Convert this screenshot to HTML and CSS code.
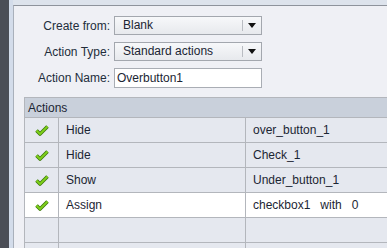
FILE: index.html
```html
<!DOCTYPE html>
<html lang="en">
<head>
    <meta charset="UTF-8">
    <title>Action Editor</title>
    <link rel="stylesheet" href="styles.css">
</head>
<body>
    <div class="side"></div>
    <div class="edge"></div>
    <div class="frame">
        <div class="panel">
            <div class="form">
                <label class="lbl">Create from:</label>
                <div class="select"><span class="val">Blank</span><span class="arrow"><i></i></span></div>
                <label class="lbl">Action Type:</label>
                <div class="select"><span class="val">Standard actions</span><span class="arrow"><i></i></span></div>
                <label class="lbl">Action Name:</label>
                <div class="input">Overbutton1</div>
            </div>

            <table class="actions">
                <colgroup>
                    <col class="c-chk">
                    <col class="c-act">
                    <col class="c-arg">
                </colgroup>
                <tr class="head"><td colspan="3">Actions</td></tr>
                <tr>
                    <td class="chk"><svg width="14" height="11" viewBox="0 0 14 11"><path d="M1.5 5.5 L5 9 L12.5 1.5" fill="none" stroke="#3f7a0c" stroke-width="3.6" stroke-linejoin="round"/><path d="M1.5 5.5 L5 9 L12.5 1.5" fill="none" stroke="#7fd11b" stroke-width="1.8" stroke-linejoin="round"/></svg></td>
                    <td>Hide</td><td>over_button_1</td>
                </tr>
                <tr>
                    <td class="chk"><svg width="14" height="11" viewBox="0 0 14 11"><path d="M1.5 5.5 L5 9 L12.5 1.5" fill="none" stroke="#3f7a0c" stroke-width="3.6" stroke-linejoin="round"/><path d="M1.5 5.5 L5 9 L12.5 1.5" fill="none" stroke="#7fd11b" stroke-width="1.8" stroke-linejoin="round"/></svg></td>
                    <td>Hide</td><td>Check_1</td>
                </tr>
                <tr>
                    <td class="chk"><svg width="14" height="11" viewBox="0 0 14 11"><path d="M1.5 5.5 L5 9 L12.5 1.5" fill="none" stroke="#3f7a0c" stroke-width="3.6" stroke-linejoin="round"/><path d="M1.5 5.5 L5 9 L12.5 1.5" fill="none" stroke="#7fd11b" stroke-width="1.8" stroke-linejoin="round"/></svg></td>
                    <td>Show</td><td>Under_button_1</td>
                </tr>
                <tr class="sel">
                    <td class="chk"><svg width="14" height="11" viewBox="0 0 14 11"><path d="M1.5 5.5 L5 9 L12.5 1.5" fill="none" stroke="#3f7a0c" stroke-width="3.6" stroke-linejoin="round"/><path d="M1.5 5.5 L5 9 L12.5 1.5" fill="none" stroke="#7fd11b" stroke-width="1.8" stroke-linejoin="round"/></svg></td>
                    <td>Assign</td><td>checkbox1&nbsp;&nbsp;&nbsp;with&nbsp;&nbsp;&nbsp;0</td>
                </tr>
                <tr><td class="chk"></td><td></td><td></td></tr>
                <tr><td class="chk"></td><td></td><td></td></tr>
            </table>
        </div>
    </div>
</body>
</html>
```

FILE: styles.css
```css
/* window chrome */
html, body {
    margin: 0;
    height: 100%;
    overflow: hidden;
}
body {
    display: flex;
    font-family: "Liberation Sans", Arial, sans-serif;
    font-size: 12px;
    color: #1b2533;
    background: #dfe5ee;
}
.side {
    width: 9px;
    flex: none;
    background: #4b4e56;
}
.edge {
    width: 4px;
    flex: none;
    background: #d3dcea;
}
.frame {
    flex: 1;
    padding-top: 5px;
    background: #dde3ec;
}
.panel {
    height: 100%;
    background: #eff0f5;
    border-top: 1px solid #8e939c;
    border-left: 1px solid #a9b0bb;
}

/* form rows */
.form {
    display: grid;
    grid-template-columns: 96px 148px;
    column-gap: 4px;
    row-gap: 7px;
    padding-top: 10px;
    align-items: center;
}
.lbl {
    text-align: right;
    color: #222d3b;
}
.select {
    display: flex;
    height: 17px;
    border: 1px solid #a3a7ae;
    background: linear-gradient(#f7f8fa, #e7e9ed);
}
.select .val {
    flex: 1;
    padding-left: 8px;
    line-height: 17px;
}
.select .arrow {
    width: 19px;
    display: flex;
    align-items: center;
    justify-content: center;
    position: relative;
}
.select .arrow::before {
    content: "";
    position: absolute;
    left: 0;
    top: 3px;
    bottom: 3px;
    border-left: 1px solid #b9bcc2;
}
.select .arrow i {
    width: 0;
    height: 0;
    border-left: 4px solid transparent;
    border-right: 4px solid transparent;
    border-top: 5px solid #111;
}
.input {
    height: 18px;
    line-height: 18px;
    padding-left: 2px;
    border: 1px solid #a9adb4;
    background: #fff;
}

/* actions grid */
.actions {
    margin: 9px 0 0 10px;
    width: 380px;
    border-collapse: collapse;
    table-layout: fixed;
}
.c-chk { width: 34px; }
.c-act { width: 187px; }
.actions td {
    border: 1px solid #b3b6bc;
    height: 24px;
    padding: 0 0 0 7px;
    background: #e5e8ef;
    white-space: nowrap;
}
.actions .head td {
    height: 19px;
    padding-left: 3px;
    background: #c9d0db;
    border-right: none;
}
.actions .sel td {
    background: #fff;
}
.actions td.chk {
    padding: 0;
    text-align: center;
}
.chk svg {
    display: block;
    margin: 1px auto 0;
}
```
